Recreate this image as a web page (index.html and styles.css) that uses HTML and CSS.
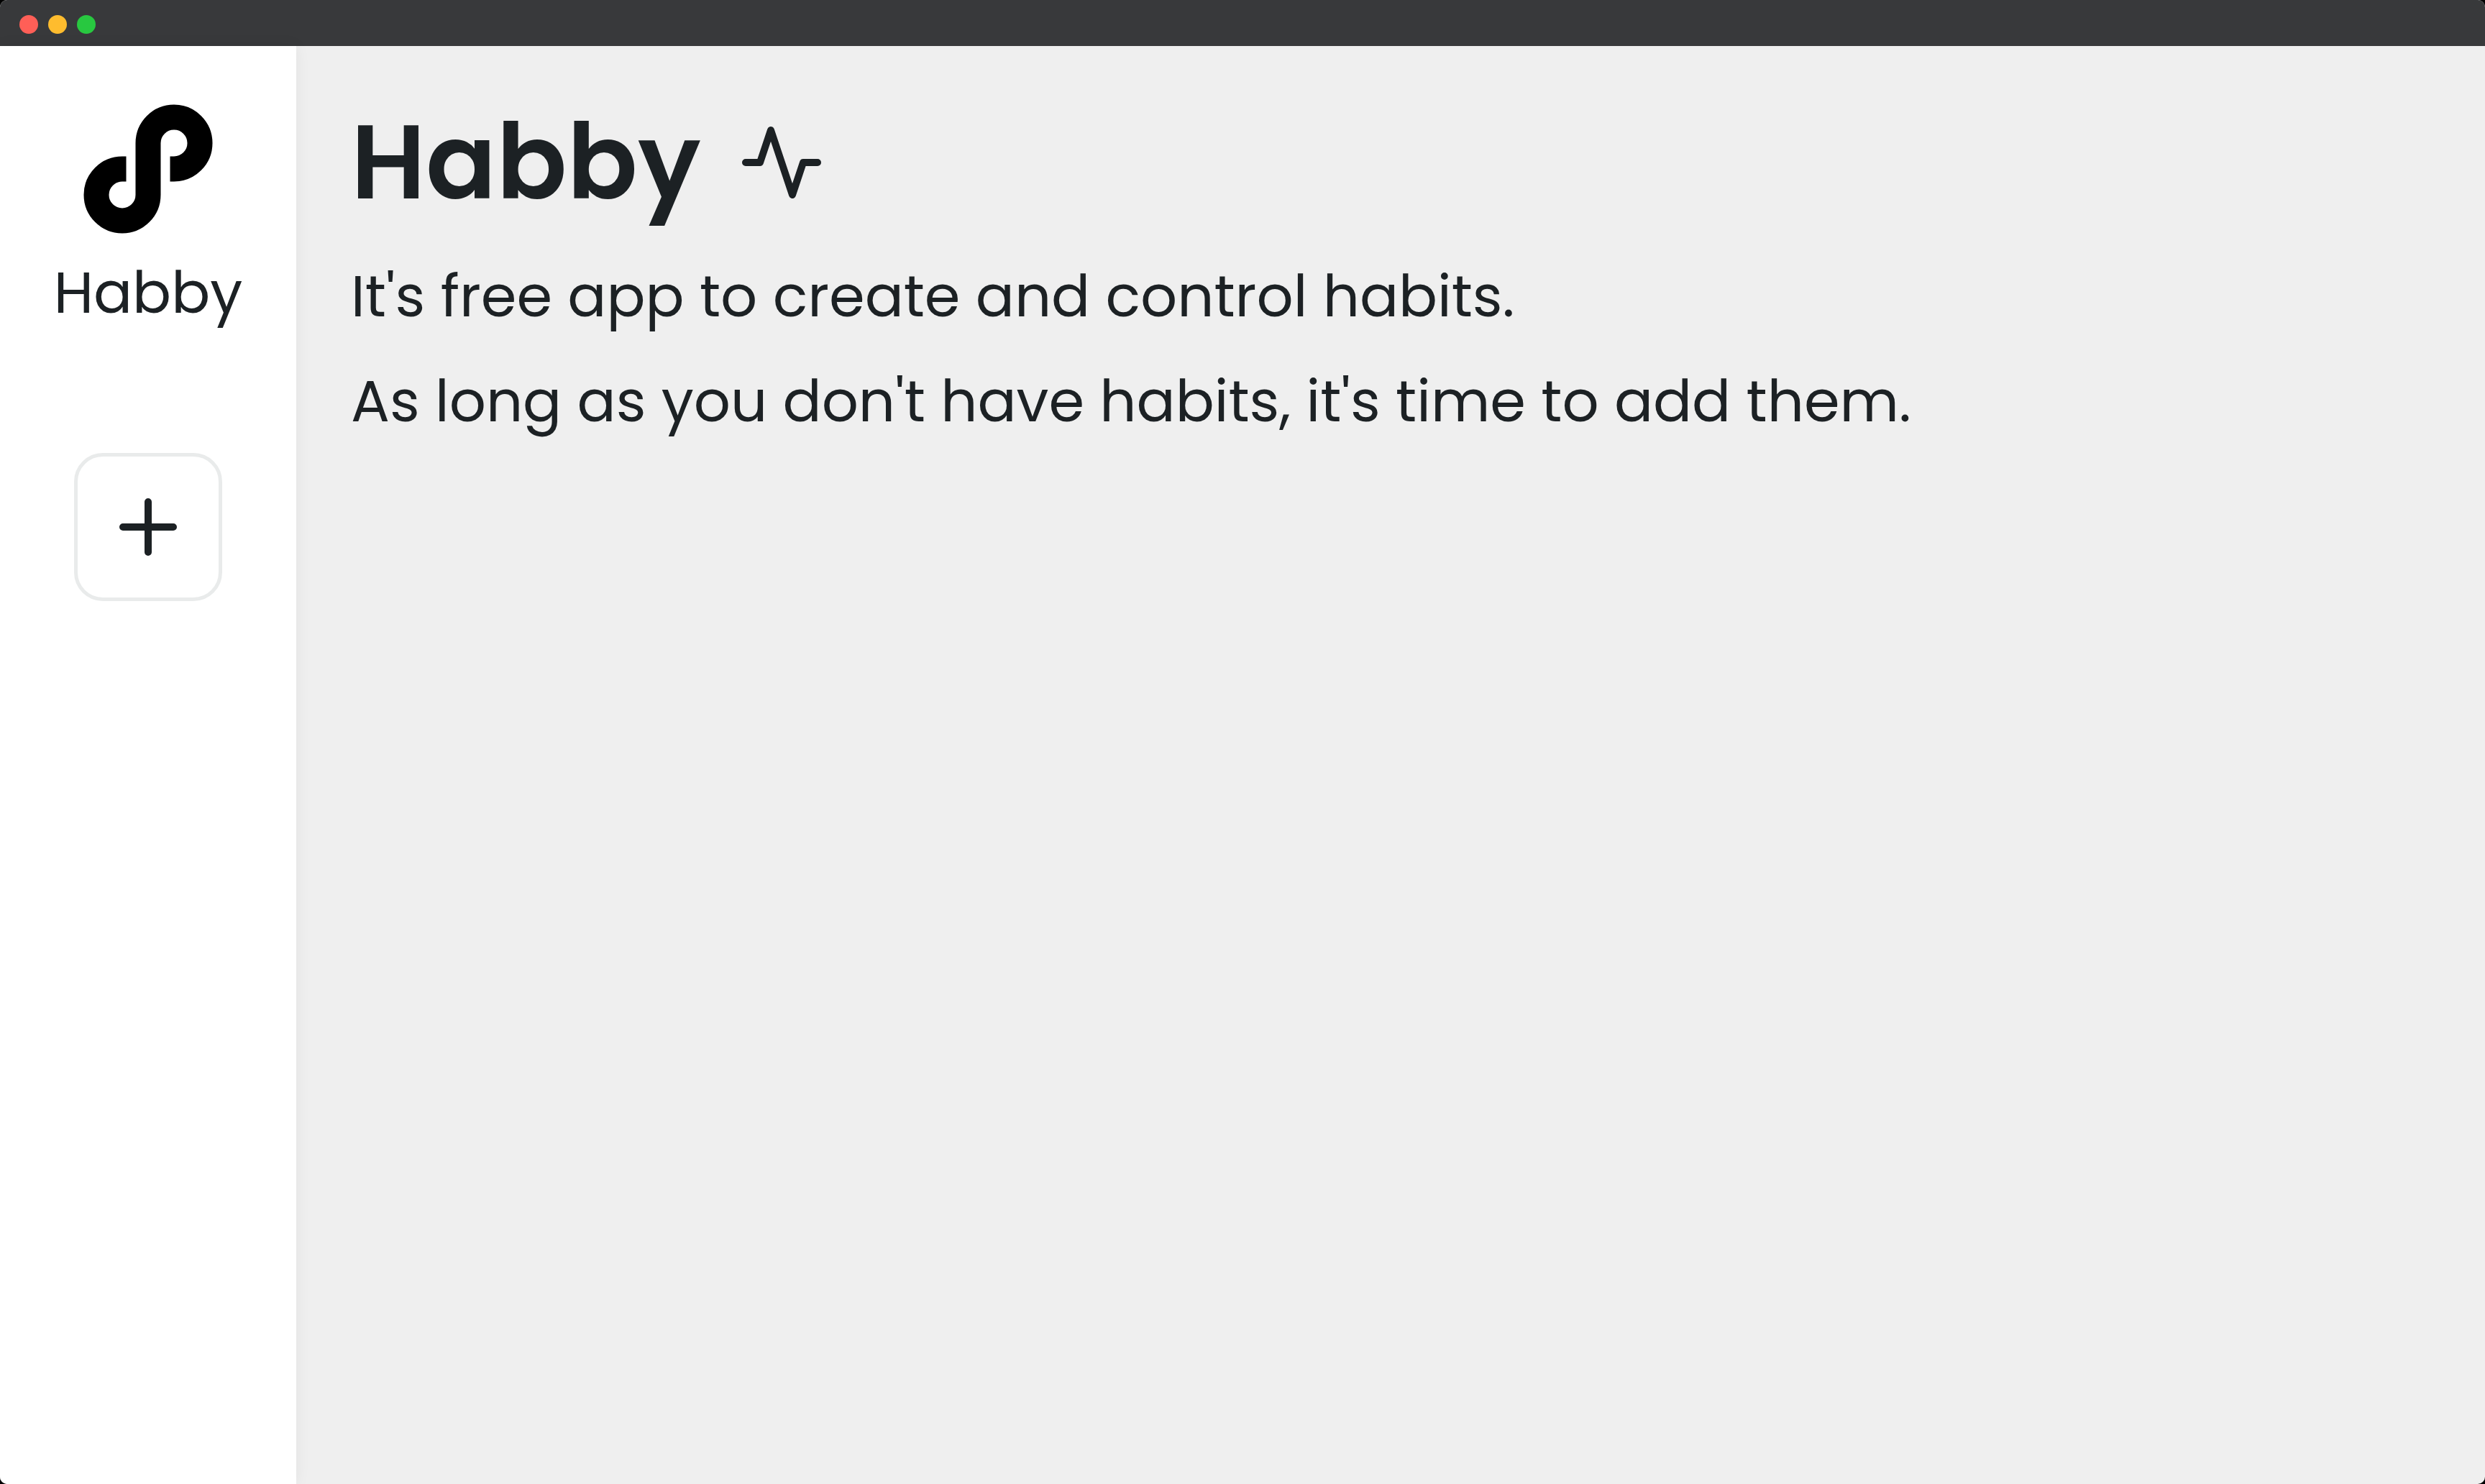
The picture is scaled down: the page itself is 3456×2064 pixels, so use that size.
FILE: index.html
```html
<!DOCTYPE html>
<html lang="en">
<head>
  <meta charset="utf-8">
  <title>Habby</title>
  <link rel="stylesheet" href="styles.css">
</head>
<body>
  <div class="window">
    <header class="titlebar">
      <span class="dot dot-close"></span>
      <span class="dot dot-minimize"></span>
      <span class="dot dot-zoom"></span>
    </header>
    <div class="layout">
      <aside class="sidebar">
        <svg class="logo" viewBox="0 0 120 120" aria-hidden="true">
          <path d="M29.500 60H24A36 36 0 1 0 60 96V24A36 36 0 1 1 96 60H90.500"/>
        </svg>
        <span class="brand">Habby</span>
        <button class="add" type="button" aria-label="Add habit">
          <svg class="icon" viewBox="0 0 24 24" aria-hidden="true"><path d="M12 5v14M5 12h14"/></svg>
        </button>
      </aside>
      <main class="content">
        <h1 class="title">Habby
          <svg class="icon" viewBox="0 0 24 24" aria-hidden="true"><path d="M22 12h-4l-3 9L9 3l-3 9H2"/></svg>
        </h1>
        <p class="text">It's free app to create and control habits.</p>
        <p class="text">As long as you don't have habits, it's time to add them.</p>
      </main>
    </div>
  </div>
</body>
</html>
```
FILE: styles.css
```css
* {
  box-sizing: border-box;
}

body {
  margin: 0;
  background: #000;
  color: #1c2124;
  font-family: Poppins, Inter, sans-serif;
  font-size: 80px;
  line-height: 120px;
}

.window {
  display: flex;
  flex-direction: column;
  min-height: 100vh;
  border-radius: 10px;
  overflow: hidden;
  background: #efefef;
}

.titlebar {
  display: flex;
  align-items: center;
  gap: 14px;
  height: 64px;
  padding: 4px 27px 0;
  background: #38393b;
}

.dot {
  width: 26px;
  height: 26px;
  border-radius: 50%;
}

.dot-close {
  background: #ff5f57;
}

.dot-minimize {
  background: #febc2e;
}

.dot-zoom {
  background: #28c840;
}

.layout {
  display: flex;
  flex: 1;
}

.sidebar {
  display: flex;
  flex-direction: column;
  align-items: center;
  width: 412px;
  padding-top: 111px;
  background: #fff;
  box-shadow: 0 0 20px rgba(0, 0, 0, 0.06);
}

.logo {
  width: 120px;
  height: 120px;
  overflow: visible;
  fill: none;
  stroke: #000;
  stroke-width: 35;
}

.brand {
  margin-top: 52px;
}

.add {
  display: flex;
  align-items: center;
  justify-content: center;
  width: 206px;
  height: 206px;
  margin-top: 163px;
  padding: 0;
  border: 5px solid #e9ebeb;
  border-radius: 40px;
  background: #fff;
  color: inherit;
}

.icon {
  width: 120px;
  height: 120px;
  fill: none;
  stroke: currentColor;
  stroke-width: 2;
  stroke-linecap: round;
  stroke-linejoin: round;
}

.content {
  display: flex;
  flex: 1;
  flex-direction: column;
  gap: 26px;
  padding: 62px 76px;
}

.title {
  display: flex;
  align-items: center;
  gap: 52px;
  margin: 0;
  font-size: 145px;
  font-weight: 600;
  line-height: 200px;
}

.text {
  margin: 0;
}
```
